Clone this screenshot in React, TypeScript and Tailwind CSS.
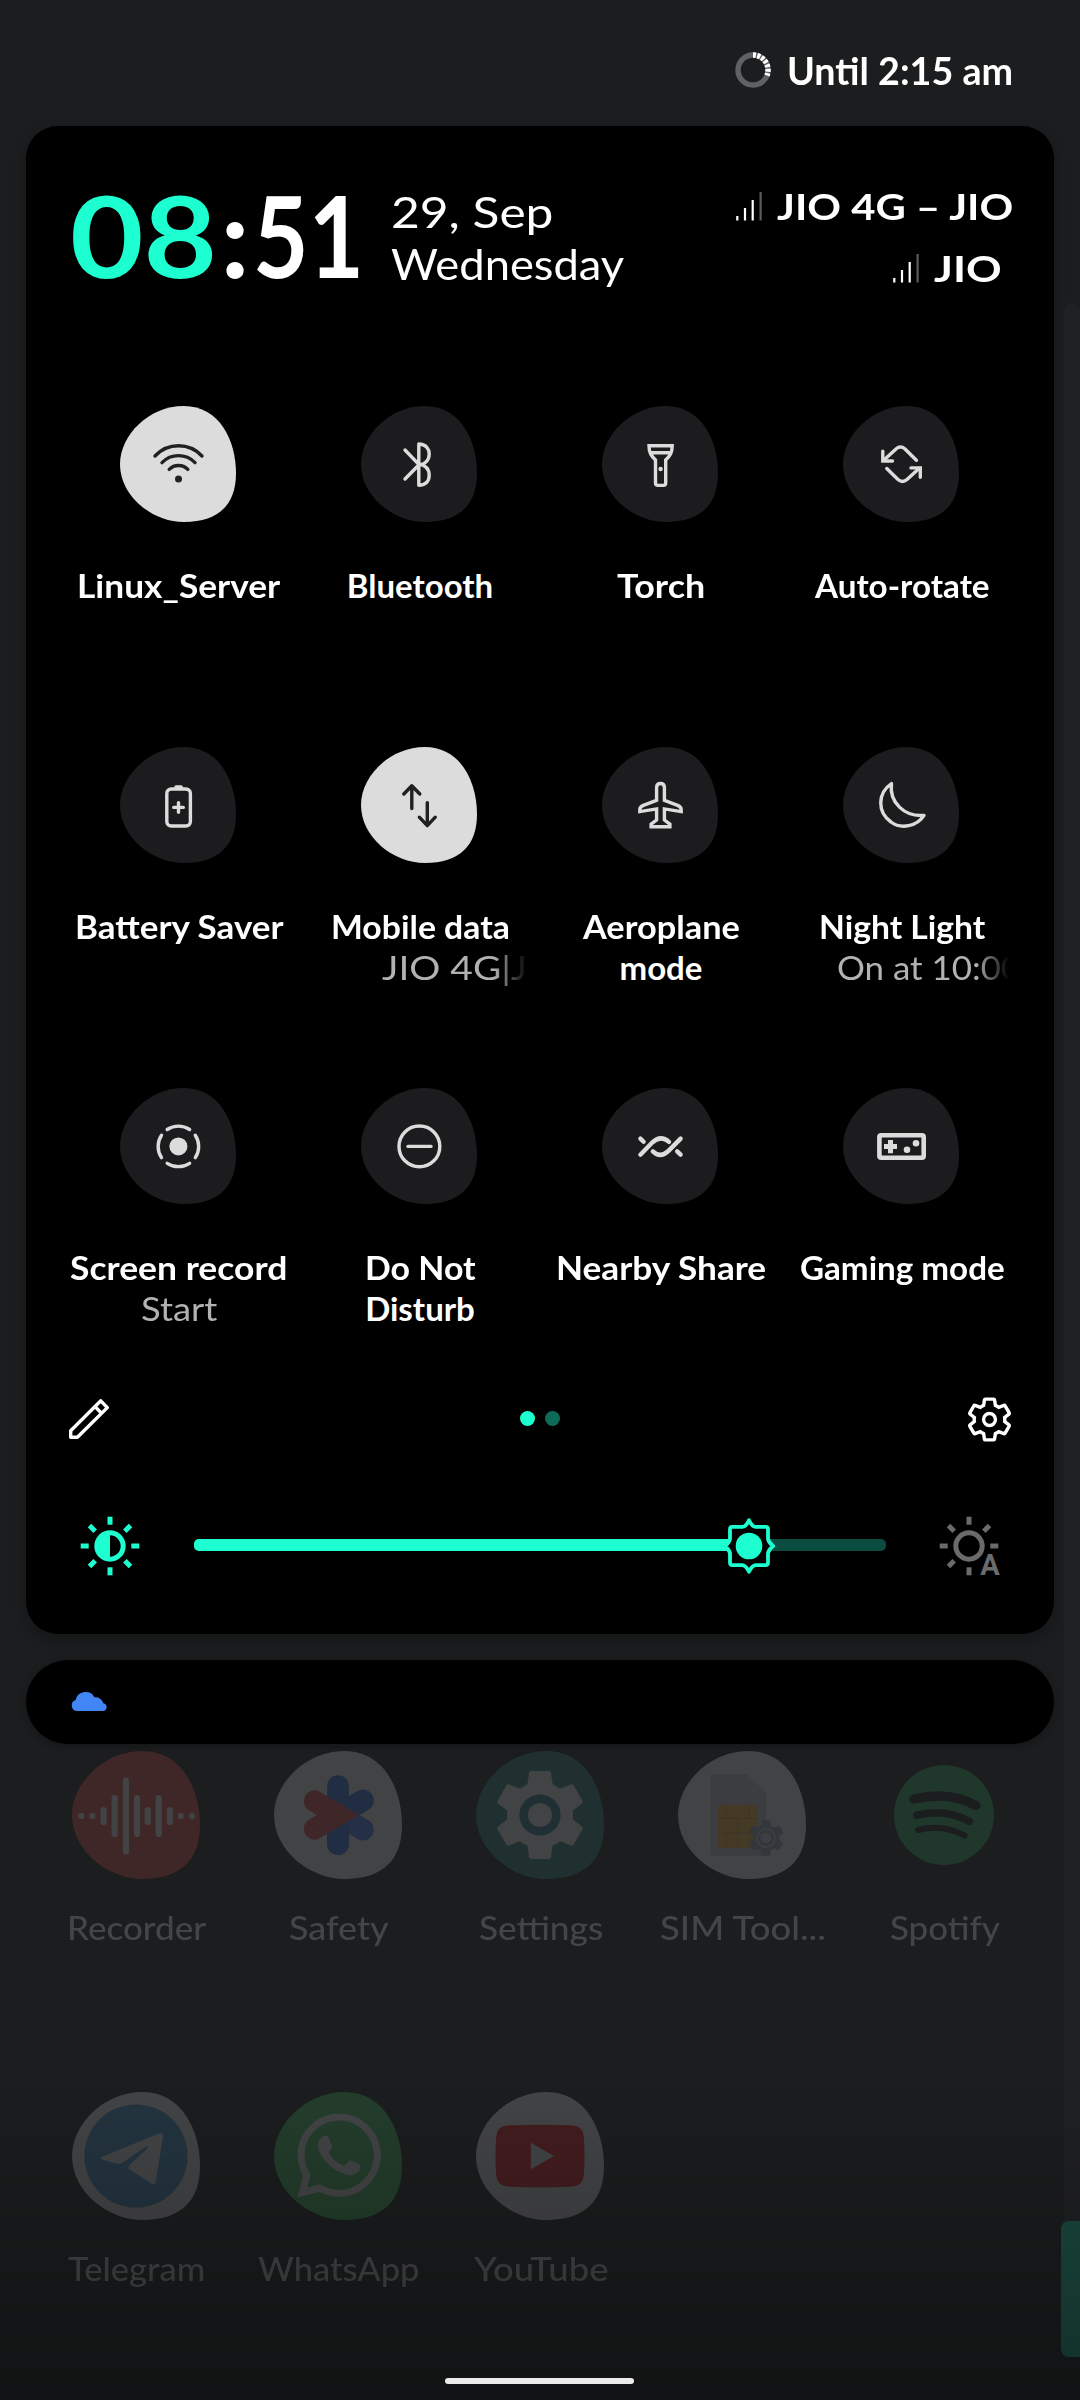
import { useLayoutEffect, useRef, useState } from "react";
import type { ReactNode } from "react";
import { MdSettings } from "react-icons/md";
import { SiWhatsapp } from "react-icons/si";

const PEBBLE =
  "M55,0 C25,0 0,25 0,50 0,78 28,100 55,100 85,100 100,85 100,58 100,30 86,0 55,0Z";

const GEAR =
  "M19.14,12.94c0.04-0.3,0.06-0.61,0.06-0.94c0-0.32-0.02-0.64-0.07-0.94l2.03-1.58c0.18-0.14,0.23-0.41,0.12-0.61l-1.92-3.32c-0.12-0.22-0.37-0.29-0.59-0.22l-2.39,0.96c-0.5-0.38-1.03-0.7-1.62-0.94L14.4,2.81c-0.04-0.24-0.24-0.41-0.48-0.41h-3.84c-0.24,0-0.43,0.17-0.47,0.41L9.25,5.35C8.66,5.59,8.12,5.92,7.63,6.29L5.24,5.33c-0.22-0.08-0.47,0-0.59,0.22L2.74,8.87C2.62,9.08,2.66,9.34,2.86,9.48l2.03,1.58C4.84,11.36,4.8,11.69,4.8,12s0.02,0.64,0.07,0.94l-2.03,1.58c-0.18,0.14-0.23,0.41-0.12,0.61l1.92,3.32c0.12,0.22,0.37,0.29,0.59,0.22l2.39-0.96c0.5,0.38,1.03,0.7,1.62,0.94l0.36,2.54c0.05,0.24,0.24,0.41,0.48,0.41h3.84c0.24,0,0.44-0.17,0.47-0.41l0.36-2.54c0.59-0.24,1.13-0.56,1.62-0.94l2.39,0.96c0.22,0.08,0.47,0,0.59-0.22l1.92-3.32c0.12-0.22,0.07-0.47-0.12-0.61L19.14,12.94z";

/* One line of text whose letterforms are widened or narrowed to span a given width. */
function Fit({ text, w, className = "" }: { text: string; w: number; className?: string }) {
  const ref = useRef<HTMLSpanElement>(null);
  const [natural, setNatural] = useState(w);
  useLayoutEffect(() => {
    setNatural(ref.current!.offsetWidth);
  }, [text]);
  return (
    <span
      ref={ref}
      className={`inline-block origin-left whitespace-pre ${className}`}
      style={{ transform: `scaleX(${w / natural})`, marginRight: w - natural }}
    >
      {text}
    </span>
  );
}

function Signal() {
  return (
    <svg width="27" height="30" viewBox="0 0 27 30">
      <path d="M1.3 25v4.5M9 17v12.5M16.7 9v20.5" stroke="#fff" strokeWidth="2.2" />
      <path d="M24.6 1v28.5" stroke="#5c5c5c" strokeWidth="2.2" />
    </svg>
  );
}

type TileData = {
  lines: [string, number][];
  sub?: [string, number];
  scroll?: boolean;
  offset?: string;
  active?: boolean;
  icon: ReactNode;
};

const TILES: TileData[] = [
  {
    lines: [["Linux_Server", 203]],
    active: true,
    icon: (
      <>
        <path d="M35 50A32 32 0 0 1 82 50M42 56.6A23 23 0 0 1 75 56.6M49.2 63.4A13 13 0 0 1 67.8 63.4" />
        <circle cx="58.5" cy="73" r="3.5" fill="currentColor" stroke="none" />
      </>
    ),
  },
  {
    lines: [["Bluetooth", 146]],
    icon: (
      <path d="M44 44L58 58.7 44 73M57.8 38C65 38 68.2 43 68.2 48 68.2 54 64 58.6 58 58.6 64 58.6 68.2 63 68.2 69 68.2 75 65 79.2 57.8 79.2Z" />
    ),
  },
  {
    lines: [["Torch", 88]],
    icon: (
      <>
        <path d="M47 39.8H70.2C70.2 47 68 50 63.7 54V77Q63.7 79.4 61.4 79.4H56Q53.5 79.4 53.5 77V54C49.5 50 47 47 47 39.8ZM49 46.8H68.5" strokeLinejoin="miter" />
        <circle cx="58.6" cy="63" r="2.2" fill="currentColor" stroke="none" />
      </>
    ),
  },
  {
    lines: [["Auto-rotate", 175]],
    icon: (
      <>
        <path d="M73.4 54.3L62 43Q57.5 39.2 53 43L41 54M43.8 62.5L55 73.5Q59.5 77.3 64 73.5L76 62.5" />
        <path d="M39.8 45.2V55H49.5M68 61.9H77.3V71.3" strokeLinejoin="miter" />
      </>
    ),
  },
  {
    lines: [["Battery Saver", 209]],
    icon: (
      <>
        <rect x="46.8" y="42" width="23.6" height="37" rx="4.5" />
        <path d="M56 40h5.2M58.5 55.6v9.6M53.7 60.4h9.6" />
      </>
    ),
  },
  {
    lines: [["Mobile data", 179]],
    sub: ["JIO 4G|J", 146],
    scroll: true,
    offset: "pl-[84px]",
    active: true,
    icon: <path d="M50.8 61.6V39.2M42.8 47L50.8 38.8 58.8 47M66.3 55.6V78.2M58.3 70.2L66.3 78.6 74.3 70.2" />,
  },
  {
    lines: [
      ["Aeroplane", 157],
      ["mode", 83],
    ],
    icon: (
      <path
        d="M58.5 36.5C61 36.5 62.4 38.2 62.4 40.4V53.3L75 58.2Q79.2 59.8 79.2 62.4V64.6L62.4 61.9V73L67.9 77.2V79.7H49.1V77.2L54.6 73V61.9L37.8 64.6V62.4Q37.8 59.8 42 58.2L54.6 53.3V40.4C54.6 38.2 56 36.5 58.5 36.5Z"
        strokeLinejoin="miter"
      />
    ),
  },
  {
    lines: [["Night Light", 166]],
    sub: ["On at 10:00", 184],
    scroll: true,
    offset: "pl-[57px]",
    icon: <path d="M48.5 36.6C46 56 62 70 81 68.4 74 79.5 58 82.5 48 75 34 65 34.5 46 48.5 36.6Z" />,
  },
  {
    lines: [["Screen record", 217]],
    sub: ["Start", 76],
    icon: (
      <>
        <path d="M47.2 41.5A20.3 20.3 0 0 1 69.6 41.5M75.3 47.2A20.3 20.3 0 0 1 75.3 69.6M69.6 75.3A20.3 20.3 0 0 1 47.2 75.3M41.5 69.6A20.3 20.3 0 0 1 41.5 47.2" />
        <circle cx="58.4" cy="58.4" r="9" fill="currentColor" stroke="none" />
      </>
    ),
  },
  {
    lines: [
      ["Do Not", 111],
      ["Disturb", 110],
    ],
    icon: (
      <>
        <circle cx="58.4" cy="58.4" r="20.4" />
        <path d="M47 58.4h23" />
      </>
    ),
  },
  {
    lines: [["Nearby Share", 210]],
    icon: (
      <path
        d="M38.4 66.7L50 54.8Q58.5 46.4 67 53.8M78.6 50.6L67 62.4Q58.5 70.8 50.8 63.4M38.4 50.6L41.6 53.8M75.2 63.4L78.6 66.7"
        strokeWidth="4.4"
      />
    ),
  },
  {
    lines: [["Gaming mode", 205]],
    icon: (
      <>
        <rect x="36.4" y="47.2" width="44.3" height="22.6" rx="1.8" strokeWidth="4.6" />
        <path d="M47.5 52v13.2M41 58.6h13" strokeWidth="5" strokeLinecap="butt" />
        <circle cx="64" cy="61.8" r="3.3" fill="currentColor" stroke="none" />
        <circle cx="73" cy="55.2" r="3.3" fill="currentColor" stroke="none" />
      </>
    ),
  },
];

function Tile({ tile }: { tile: TileData }) {
  return (
    <div className="flex flex-col items-center">
      <svg
        width="116"
        height="116"
        viewBox="0 0 116 116"
        className={tile.active ? "text-[#202122]" : "text-[#dcdcdc]"}
        fill="none"
        stroke="currentColor"
        strokeWidth="3.4"
        strokeLinecap="round"
        strokeLinejoin="round"
      >
        <path d={PEBBLE} transform="scale(1.16)" fill={tile.active ? "#dcdcdc" : "#1c1c1e"} stroke="none" />
        {tile.icon}
      </svg>
      <div className="mt-[43px] flex w-full flex-col items-center pl-[3px] text-[33px] leading-[40.5px] font-bold text-white">
        {tile.lines.map(([t, w]) => (
          <Fit key={t} text={t} w={w} />
        ))}
      </div>
      {tile.sub &&
        (tile.scroll ? (
          <div
            className={`w-[229px] self-start overflow-hidden text-[33px] leading-[40.5px] text-[#b2b2b2] [mask-image:linear-gradient(to_right,black_196px,transparent_229px)] ${tile.offset}`}
          >
            <Fit text={tile.sub[0]} w={tile.sub[1]} />
          </div>
        ) : (
          <div className="pl-[3px] text-[33px] leading-[40.5px] text-[#b2b2b2]">
            <Fit text={tile.sub[0]} w={tile.sub[1]} />
          </div>
        ))}
    </div>
  );
}

function Rays({ skipLast = false }: { skipLast?: boolean }) {
  const angles = skipLast ? [0, 45, 90, 180, 225, 270, 315] : [0, 45, 90, 135, 180, 225, 270, 315];
  return (
    <g stroke="currentColor" strokeWidth="5">
      {angles.map((a) => (
        <path key={a} d={a % 90 === 0 ? "M30 0.7v8" : "M30 1v8"} transform={`rotate(${a} 30 30)`} />
      ))}
    </g>
  );
}

const W = "#424345";

const RECORDER_BARS: [number, number][] = [
  [9.3, 0], [20.3, 0], [31.6, 12], [42.7, 36], [53.9, 71], [65, 36], [75.7, 12], [86.7, 36], [97.8, 12], [108.8, 0], [120, 0],
];

type AppData = { name: string; w: number; bg?: string; icon: ReactNode };

const APPS: AppData[] = [
  {
    name: "Recorder",
    w: 139,
    bg: "#3f2727",
    icon: (
      <g stroke={W} strokeWidth="6.2" strokeLinecap="round">
        {RECORDER_BARS.map(([x, h]) => (
          <path key={x} d={`M${x} ${65 - h / 2}v${h + 0.01}`} />
        ))}
      </g>
    ),
  },
  {
    name: "Safety",
    w: 99,
    bg: W,
    icon: (
      <>
        <g stroke="#202d42" strokeWidth="21.6" strokeLinecap="round">
          <path d="M64 35v58" />
          <path d="M64 64L89 49.4" />
        </g>
        <path d="M64 64L89 78.6" stroke="#252f45" strokeWidth="21.6" strokeLinecap="round" />
        <path d="M64 64v29" stroke="#202d42" strokeWidth="21.6" strokeLinecap="round" />
        <path
          d="M44.4 40L85 64 44.4 88A10.8 10.8 0 0 1 33.6 69.7L42.8 64 33.6 58.3A10.8 10.8 0 0 1 44.4 40Z"
          fill="#3f2628"
        />
      </>
    ),
  },
  {
    name: "Settings",
    w: 124,
    bg: "#203030",
    icon: (
      <>
        <MdSettings x={9} y={9} size={110} color={W} />
        <circle cx="64" cy="64" r="20.6" fill="#202f34" />
        <circle cx="64" cy="64" r="12" fill={W} />
      </>
    ),
  },
  {
    name: "SIM Tool...",
    w: 166,
    bg: W,
    icon: (
      <>
        <path d="M35 23H68.6L88 41.5V105H35Q32 105 32 102V26Q32 23 35 23Z" fill="#3c3d40" />
        <rect x="40" y="53.7" width="39.6" height="43" rx="2" fill="#453a25" />
        <path d="M40 67.5h39.6M40 82h39.6M48 54v13M71 54v13M60 67v15M48 82v14M60 82v14M71 82v14" stroke="#3e3425" strokeWidth="1" />
        <MdSettings x={66} y={65} size={44} color="#33373b" />
        <circle cx="88" cy="87" r="10" fill="#3c3f43" />
        <circle cx="88" cy="87" r="8" fill="#33373b" />
        <circle cx="88" cy="87" r="5.2" fill="#3c3f43" />
      </>
    ),
  },
  {
    name: "Spotify",
    w: 110,
    icon: (
      <>
        <circle cx="64" cy="64" r="50" fill="#20382b" />
        <g stroke="#1b1d1e" fill="none" strokeLinecap="round">
          <path d="M34 48Q69 39.5 96 54.5" strokeWidth="9.4" />
          <path d="M37 64.3Q65 57 89.4 70.3" strokeWidth="7.6" />
          <path d="M38 79Q63 72.5 84.6 84.7" strokeWidth="6" />
        </g>
      </>
    ),
  },
  {
    name: "Telegram",
    w: 137,
    bg: "#444547",
    icon: (
      <>
        <circle cx="64" cy="64" r="51.6" fill="#243541" />
        <path
          d="M30.5 64.5L86.5 41.8Q91.3 40.2 91 44.5L83.8 89.5Q82.6 93.6 79 91.6L58 77.8Q55 75.5 57.6 73L75.6 56Q76.6 53.4 74 54.6L51 70.6Q48.4 72.4 45 71.8L30.6 67.8Q27 66.2 30.5 64.5Z"
          fill="#444547"
        />
      </>
    ),
  },
  {
    name: "WhatsApp",
    w: 161,
    bg: "#243e2c",
    icon: <SiWhatsapp x={23} y={21.5} size={84} color="#444547" />,
  },
  {
    name: "YouTube",
    w: 135,
    bg: "#444547",
    icon: (
      <>
        <path
          d="M31 33.6Q64 31.8 97 33.6Q107 34.2 107.8 45Q109.2 64 107.8 83Q107 93.8 97 94.4Q64 96.2 31 94.4Q21 93.8 20.2 83Q18.8 64 20.2 45Q21 34.2 31 33.6Z"
          fill="#451d20"
        />
        <path d="M54.8 50.8L78 64 54.8 77.2Z" fill="#444547" />
      </>
    ),
  },
];

function AppIcon({ app }: { app: AppData }) {
  return (
    <div className="flex flex-col items-center text-[33px] leading-[40px] font-medium text-[#444547]">
      <svg width="128" height="128" viewBox="0 0 128 128">
        {app.bg && <path d={PEBBLE} transform="scale(1.28)" fill={app.bg} />}
        {app.icon}
      </svg>
      <div className="mt-[28px] pl-[2px]">
        <Fit text={app.name} w={app.w} />
      </div>
    </div>
  );
}

export default function App() {
  return (
    <div className="relative flex h-[2400px] w-[1080px] flex-col overflow-hidden bg-[#1b1d1e] font-['Lato',sans-serif]">
      {/* Scroll track and thumb at the screen edge */}
      <div className="absolute top-[303px] right-0 h-[2054px] w-4 rounded-t-lg bg-[#202123]" />
      <div className="absolute top-[2221px] right-0 h-[136px] w-[19px] rounded-l-lg bg-[#1b4a40]" />

      {/* Alarm status */}
      <header className="flex h-[126px] items-start justify-end gap-[16px] pt-[46px] pr-[67px]">
        <svg width="36" height="36" viewBox="0 0 36 36" className="mt-[6px]" fill="none">
          <circle cx="18" cy="18" r="15" stroke="#606162" strokeWidth="5.4" />
          <path d="M18 3A15 15 0 0 1 32 23.5" stroke="#fff" strokeWidth="5.4" strokeDasharray="3 1.4" />
        </svg>
        <div className="text-[38px] leading-[48px] font-bold text-white">
          <Fit text="Until 2:15 am" w={226} />
        </div>
      </header>

      {/* Quick settings panel */}
      <section className="mx-[26px] h-[1508px] shrink-0 rounded-[32px] bg-black shadow-[0_6px_16px_rgba(0,0,0,0.25)]">
        <div className="flex h-[280px] items-start pr-[41px] pl-[44px] text-white">
          <div className="mt-[52px] flex text-[113px] leading-[112px] font-bold">
            <Fit text="08" w={147} className="text-[#1dffd0]" />
            <span className="w-[36px] text-center">:</span>
            <Fit text="51" w={111} />
          </div>
          <div className="mt-[60px] ml-[27px] flex flex-col items-start text-[42px] leading-[52px]">
            <Fit text="29, Sep" w={162} />
            <Fit text="Wednesday" w={233} />
          </div>
          <div className="mt-[49px] ml-auto flex flex-col items-end text-[37px] leading-[62px] font-bold">
            <div className="flex items-center gap-[14px]">
              <Signal />
              <Fit text="JIO 4G – JIO" w={236} />
            </div>
            <div className="flex items-center gap-[14px] pr-[11px]">
              <Signal />
              <Fit text="JIO" w={68} />
            </div>
          </div>
        </div>

        <div className="mr-[33px] ml-[31px] grid grid-cols-4 grid-rows-[341px_341px_265px]">
          {TILES.map((t) => (
            <Tile key={t.lines[0][0]} tile={t} />
          ))}
        </div>

        <div className="mt-[36px] flex h-[60px] items-center pr-[39px] pl-[43px] text-white">
          <svg width="40" height="40" viewBox="0 0 40 40" fill="none" stroke="currentColor" strokeWidth="3.4" strokeLinejoin="round">
            <path d="M1.7 38.3V31.8L31.8 1.8 38.3 8.6 8.4 38.3ZM26 7.6L32.6 14.3" />
          </svg>
          <div className="mb-[2px] ml-[411px] flex gap-[10px]">
            <span className="size-[15px] rounded-full bg-[#1dffd0]" />
            <span className="size-[15px] rounded-full bg-[#0e6b58]" />
          </div>
          <svg width="51" height="51" viewBox="0 0 24 24" className="ml-auto" fill="none" stroke="currentColor" strokeWidth="1.6">
            <path d={GEAR} />
            <circle cx="12" cy="12" r="2.8" />
          </svg>
        </div>

        <div className="mt-[67px] flex h-[60px] items-center pl-[54px]">
          <svg width="60" height="60" viewBox="0 0 60 60" className="text-[#1dffd0]">
            <Rays />
            <circle cx="30" cy="30" r="13.2" fill="none" stroke="currentColor" strokeWidth="5" />
            <path d="M30 16v28a14 14 0 0 1 0-28Z" fill="currentColor" />
          </svg>
          <div className="relative mb-[2px] ml-[54px] flex h-3 w-[692px] rounded-[5px] bg-[#0a4c40]">
            <div className="h-full w-[556px] rounded-l-[5px] bg-[#1dffd0]" />
            <svg width="58" height="58" viewBox="0 0 58 58" className="absolute top-[-22px] left-[526px] text-[#1dffd0]">
              <path
                d="M29 3.2Q32 9.5 35.5 9.9H45.6Q48 9.9 48 12.4V22Q48.8 25.6 53.2 29 48.8 32.4 48 36V45.6Q48 48.1 45.6 48.1H35.5Q32 48.5 29 54.8 26 48.5 22.5 48.1H12.4Q10 48.1 10 45.6V36Q9.2 32.4 4.8 29 9.2 25.6 10 22V12.4Q10 9.9 12.4 9.9H22.5Q26 9.5 29 3.2Z"
                fill="#000"
                stroke="currentColor"
                strokeWidth="3.8"
                strokeLinejoin="round"
              />
              <circle cx="29" cy="29" r="13.3" fill="currentColor" />
            </svg>
          </div>
          <svg width="64" height="60" viewBox="0 0 64 60" className="ml-[53px] text-[#6b6b6b]">
            <Rays skipLast />
            <circle cx="30" cy="30" r="13.2" fill="none" stroke="currentColor" strokeWidth="5" />
            <text x="51" y="58.5" textAnchor="middle" fill="currentColor" className="font-['Roboto',sans-serif] text-[29px] font-bold">
              A
            </text>
          </svg>
        </div>
      </section>

      {/* Collapsed notification */}
      <section className="mx-[26px] mt-[26px] flex h-[84px] shrink-0 items-center rounded-full bg-black pb-[2px] pl-[45px] shadow-[0_2px_8px_rgba(0,0,0,0.3)]">
        <svg width="37" height="22" viewBox="0 0 37 22" fill="#4285f4">
          <path d="M6 21A5.6 5.6 0 0 1 4.6 10.1 10.2 10.2 0 0 1 23.6 7.4 8 8 0 0 1 32.4 13.2 4 4 0 0 1 32.6 21Z" />
        </svg>
      </section>

      {/* App drawer behind the shade */}
      <main className="mr-[35px] ml-[35px] mt-[7px] grid grid-cols-5 grid-rows-[341px_auto]">
        {APPS.map((a) => (
          <AppIcon key={a.name} app={a} />
        ))}
      </main>

      {/* Navigation scrim and gesture bar */}
      <div className="absolute inset-x-0 bottom-0 flex h-[340px] items-end justify-center bg-linear-to-b from-transparent to-black/35 pb-[16px]">
        <div className="mr-[2px] h-[6px] w-[189px] rounded-full bg-[#ebebeb]" />
      </div>
    </div>
  );
}
